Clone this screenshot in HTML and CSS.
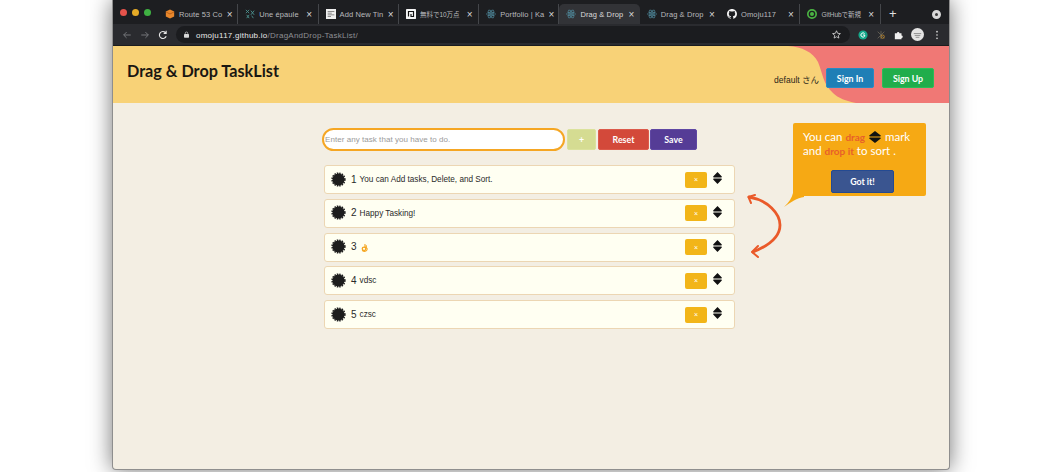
FILE: index.html
```html
<!DOCTYPE html>
<html lang="en">
<head>
    <meta charset="UTF-8">
    <meta name="viewport" content="width=device-width, initial-scale=1.0">
    <title>Drag & Drop TaskList</title>
    <link rel="stylesheet" href="styles.css">
</head>
<body>
    <svg class="defs" width="0" height="0">
        <symbol id="react" viewBox="0 0 12 12">
            <g fill="none" stroke="#4f8a9c" stroke-width=".8">
                <ellipse cx="6" cy="6" rx="5.4" ry="2.2"/>
                <ellipse cx="6" cy="6" rx="5.4" ry="2.2" transform="rotate(60 6 6)"/>
                <ellipse cx="6" cy="6" rx="5.4" ry="2.2" transform="rotate(120 6 6)"/>
            </g>
            <circle cx="6" cy="6" r="1.1" fill="#4f8a9c"/>
        </symbol>
        <symbol id="badge" viewBox="0 0 16 16">
            <circle cx="8" cy="8" r="6.4" fill="#1d1d1d"/>
            <circle cx="8" cy="8" r="6.8" fill="none" stroke="#1d1d1d" stroke-width="1.6" stroke-dasharray="1.6 1.07"/>
        </symbol>
        <symbol id="sort" viewBox="0 0 10 16" preserveAspectRatio="none">
            <path d="M5 0 L9.8 6 Q10 7.200 9 7.200 H1 Q0 7.200 .2 6 Z M1 8.800 H9 Q10 8.800 9.800 10 L5 16 L.2 10 Q0 8.800 1 8.800 Z" fill="#111"/>
        </symbol>
    </svg>

    <div class="window">
        <div class="tabstrip">
            <div class="lights"><i class="red"></i><i class="amber"></i><i class="green"></i></div>
            <div class="tab">
                <svg class="favicon" viewBox="0 0 12 12"><path d="M6 .5 11 3v6l-5 2.5L1 9V3z" fill="#e8872c"/><path d="M1 3l5 2.5L11 3v1L6 6.5 1 4z" fill="#b85f17"/></svg>
                <span class="tab-title">Route 53 Co</span><b>×</b>
            </div>
            <div class="tab">
                <svg class="favicon" viewBox="0 0 12 12"><g stroke="#4f9a96" stroke-width="1" fill="none"><path d="M1 1l4 4M5 1L1 5M7 2l4 5M11 2L7 7M2 7l3 4M5 7l-3 4M8 8l2 3"/></g></svg>
                <span class="tab-title">Une épaule</span><b>×</b>
            </div>
            <div class="tab">
                <svg class="favicon" viewBox="0 0 12 12"><rect width="12" height="12" fill="#eee"/><path d="M2 3h8M2 5h5M2 7h8M2 9h4" stroke="#777"/></svg>
                <span class="tab-title">Add New Tin</span><b>×</b>
            </div>
            <div class="tab">
                <svg class="favicon" viewBox="0 0 12 12"><rect width="12" height="12" rx="1" fill="#f4f4f4"/><path d="M3 9V3h6v6H6V6" fill="none" stroke="#111" stroke-width="1.4"/></svg>
                <span class="tab-title tab-title-cjk">無料で10万点</span><b>×</b>
            </div>
            <div class="tab">
                <svg class="favicon"><use href="#react"/></svg>
                <span class="tab-title">Portfolio | Ka</span><b>×</b>
            </div>
            <div class="tab tab-active">
                <svg class="favicon"><use href="#react"/></svg>
                <span class="tab-title">Drag &amp; Drop</span><b>×</b>
            </div>
            <div class="tab tab-plain">
                <svg class="favicon"><use href="#react"/></svg>
                <span class="tab-title">Drag &amp; Drop</span><b>×</b>
            </div>
            <div class="tab">
                <svg class="favicon" viewBox="0 0 16 16"><path fill="#f4f4f4" d="M8 0C3.6 0 0 3.6 0 8c0 3.5 2.3 6.5 5.5 7.6.4.1.5-.2.5-.4v-1.400c-2.200.5-2.700-1-2.700-1-.4-.9-.9-1.200-.9-1.200-.7-.5.1-.5.1-.5.8.1 1.200.8 1.200.8.7 1.200 1.900.9 2.300.7.1-.5.3-.9.5-1.100-1.800-.2-3.600-.9-3.600-4 0-.9.3-1.600.8-2.100-.1-.2-.4-1 .1-2.100 0 0 .7-.2 2.200.8.6-.2 1.300-.3 2-.3s1.400.1 2 .3c1.500-1 2.200-.8 2.200-.8.4 1.100.2 1.900.1 2.100.5.6.8 1.300.8 2.100 0 3.100-1.900 3.700-3.700 3.900.3.3.6.8.6 1.500v2.200c0 .2.1.5.6.4C13.700 14.500 16 11.500 16 8c0-4.400-3.600-8-8-8z"/></svg>
                <span class="tab-title">Omoju117</span><b>×</b>
            </div>
            <div class="tab">
                <svg class="favicon" viewBox="0 0 12 12"><circle cx="6" cy="6" r="5" fill="none" stroke="#4bb543" stroke-width="2"/><circle cx="6" cy="6" r="2.4" fill="#4bb543"/></svg>
                <span class="tab-title tab-title-cjk">GitHubで新規</span><b>×</b>
            </div>
            <div class="new-tab">+</div>
            <div class="cast"></div>
        </div>

        <div class="toolbar">
            <div class="nav-buttons">
                <svg viewBox="0 0 12 12"><path d="M10.5 6H2M5.5 2.500 2 6l3.500 3.500" fill="none" stroke="#74767a" stroke-width="1.2"/></svg>
                <svg viewBox="0 0 12 12"><path d="M1.5 6H10M6.500 2.500 10 6l-3.500 3.500" fill="none" stroke="#74767a" stroke-width="1.2"/></svg>
                <svg viewBox="0 0 12 12"><path d="M9.8 7.500A4.200 4.200 0 1 1 9 3.200M9.800 1v3H6.800" fill="none" stroke="#e6e6e6" stroke-width="1.3"/></svg>
            </div>
            <div class="omnibox">
                <svg class="lock" viewBox="0 0 8 10"><rect y="4" width="8" height="6" rx="1" fill="#d8d8d8"/><path d="M2 4.500V3a2 2 0 0 1 4 0v1.500" fill="none" stroke="#d8d8d8"/></svg>
                <span class="url"><strong>omoju117.github.io</strong>/DragAndDrop-TaskList/</span>
                <svg class="star" viewBox="0 0 12 12"><path d="M6 1l1.500 3.400 3.700.4-2.800 2.400.8 3.600L6 9l-3.200 1.800.8-3.600L.8 4.800l3.700-.4z" fill="none" stroke="#e6e6e6"/></svg>
            </div>
            <div class="extensions">
                <svg viewBox="0 0 12 12"><circle cx="6" cy="6" r="5.500" fill="#14a88a"/><path d="M8 4.500A2.500 2.500 0 1 0 8 7.500V6H6" fill="none" stroke="#fff" stroke-width="1.200"/></svg>
                <svg viewBox="0 0 12 12"><path d="M2 2l8 8M10 2L2 10M6 1v10" stroke="#6a6558" stroke-width="1"/><circle cx="8" cy="8" r="2" fill="none" stroke="#c08a2c"/></svg>
                <svg viewBox="0 0 12 12"><path d="M1 4h2.500a1.500 1.500 0 0 1 3 0H9v2.500a1.500 1.500 0 0 1 0 3V11H1z" fill="#f0f0f0"/></svg>
                <svg class="avatar" viewBox="0 0 14 14"><circle cx="7" cy="7" r="7" fill="#e4e4e4"/><path d="M3 6h8M4 8h6M5 10h4" stroke="#8a8a8a"/></svg>
                <svg class="menu-dots" viewBox="0 0 4 12"><circle cx="2" cy="2" r="1" fill="#ddd"/><circle cx="2" cy="6" r="1" fill="#ddd"/><circle cx="2" cy="10" r="1" fill="#ddd"/></svg>
            </div>
        </div>

        <header class="app-header">
            <svg class="header-blob" viewBox="0 0 161 57" preserveAspectRatio="none">
                <path d="M0 0 C14 1 25 6 30 16 C35 28 35 38 45 47 C50 52 58 55 68 57 H161 V0 Z" fill="#f07875"/>
            </svg>
            <h1 class="app-title">Drag &amp; Drop TaskList</h1>
            <div class="user-area">
                <span class="user-name">default さん</span>
                <button class="btn btn-signin">Sign In</button>
                <button class="btn btn-signup">Sign Up</button>
            </div>
        </header>

        <main class="content">
            <div class="tasks">
                <div class="task-form">
                    <input class="task-input" type="text" placeholder="Enter any task that you have to do.">
                    <button class="btn btn-add">+</button>
                    <button class="btn btn-reset">Reset</button>
                    <button class="btn btn-save">Save</button>
                </div>
                <ul class="task-list">
                    <li class="task">
                        <svg class="task-badge"><use href="#badge"/></svg>
                        <span class="task-num">1</span>
                        <span class="task-text">You can Add tasks, Delete, and Sort.</span>
                        <button class="btn-delete">×</button>
                        <svg class="task-sort"><use href="#sort"/></svg>
                    </li>
                    <li class="task">
                        <svg class="task-badge"><use href="#badge"/></svg>
                        <span class="task-num">2</span>
                        <span class="task-text">Happy Tasking!</span>
                        <button class="btn-delete">×</button>
                        <svg class="task-sort"><use href="#sort"/></svg>
                    </li>
                    <li class="task">
                        <svg class="task-badge"><use href="#badge"/></svg>
                        <span class="task-num">3</span>
                        <svg class="ok-hand" viewBox="0 0 10 10"><circle cx="4.500" cy="6.500" r="2" fill="none" stroke="#f5a623" stroke-width="1.500"/><path d="M6 5.500 C8 5 8.500 6.500 7.500 8 C6.500 9.800 3 9.800 2.500 8 M5.500 5V1M7 5.500V2.500" fill="none" stroke="#f5a623" stroke-width="1.200"/></svg>
                        <span class="task-text"></span>
                        <button class="btn-delete">×</button>
                        <svg class="task-sort"><use href="#sort"/></svg>
                    </li>
                    <li class="task">
                        <svg class="task-badge"><use href="#badge"/></svg>
                        <span class="task-num">4</span>
                        <span class="task-text">vdsc</span>
                        <button class="btn-delete">×</button>
                        <svg class="task-sort"><use href="#sort"/></svg>
                    </li>
                    <li class="task">
                        <svg class="task-badge"><use href="#badge"/></svg>
                        <span class="task-num">5</span>
                        <span class="task-text">czsc</span>
                        <button class="btn-delete">×</button>
                        <svg class="task-sort"><use href="#sort"/></svg>
                    </li>
                </ul>
            </div>

            <aside class="tip">
                <p class="tip-text">You can <em>drag</em> <svg class="tip-sort"><use href="#sort"/></svg> mark<br>and <em>drop it</em> to sort .</p>
                <button class="btn btn-gotit">Got it!</button>
                <svg class="tip-tail" viewBox="0 0 20 14"><path d="M20 0 V4 C13 5 7 9 0 14 C5 9 8 5 9 0 Z" fill="#f6a914"/></svg>
            </aside>

            <svg class="swap-arrow" viewBox="0 0 40 66">
                <path d="M3 3 C22 6 34 20 34 31 C34 44 22 52 7 58" fill="none" stroke="#ea5a2a" stroke-width="2.800" stroke-linecap="round"/>
                <path d="M9 1 L2.500 3 L5 9 M12 52 L6 58 L12 63" fill="none" stroke="#ea5a2a" stroke-width="2" stroke-linecap="round" stroke-linejoin="round"/>
            </svg>
        </main>
    </div>
</body>
</html>
```

FILE: styles.css
```css
* {
    box-sizing: border-box;
}
html, body {
    height: 100%;
}
body {
    margin: 0;
    overflow: hidden;
    background-color: #fff;
    font-family: "Liberation Sans", Arial, sans-serif;
}
.defs {
    position: absolute;
}
.window {
    width: 838px;
    height: 470px;
    margin-left: 112px;
    display: flex;
    flex-direction: column;
    background-color: #f3eee3;
    border: 1px solid #8e8e8e;
    border-top: none;
    border-radius: 0 0 4px 4px;
    box-shadow: 0 0 22px rgba(0, 0, 0, 0.55);
    overflow: hidden;
}

/* browser chrome */
.tabstrip {
    height: 24px;
    display: flex;
    align-items: center;
    background-color: #1d1e21;
    color: #b9babd;
    font-size: 7.5px;
}
.lights {
    width: 45px;
    display: flex;
    gap: 5px;
    padding-left: 7px;
}
.lights i {
    width: 7px;
    height: 7px;
    border-radius: 50%;
}
.lights .red { background-color: #e5534b; }
.lights .amber { background-color: #e5ab27; }
.lights .green { background-color: #3fb142; }
.tab {
    width: 80.3px;
    height: 20px;
    margin-top: 4px;
    padding: 0 4px 0 7px;
    display: flex;
    align-items: center;
    gap: 4px;
    border-right: 1px solid #44464a;
    white-space: nowrap;
}
.tab b {
    width: 9px;
    font-size: 10px;
    font-weight: normal;
    text-align: center;
    color: #d8d8d8;
}
.tab-active {
    background-color: #323337;
    border-radius: 5px 5px 0 0;
    border-right: none;
    color: #dcdcdc;
}
.tab-plain {
    border-right: none;
}
.favicon {
    width: 10px;
    height: 10px;
    flex: none;
}
.tab-title {
    flex: 1;
    letter-spacing: 0.1px;
    font-family: "Liberation Sans", "Noto Sans CJK JP", sans-serif;
}
.tab-title-cjk {
    font-size: 6.5px;
    letter-spacing: 0;
}
.new-tab {
    width: 24px;
    text-align: center;
    font-size: 13px;
    color: #e0e0e0;
    margin-top: 2px;
}
.cast {
    width: 9px;
    height: 9px;
    margin: 4px 8px 0 auto;
    border-radius: 50%;
    background-color: #3a3a3a;
    border: 3px solid #d8d8d8;
}
.toolbar {
    height: 22px;
    display: flex;
    align-items: center;
    background-color: #2a2b2f;
    border-bottom: 1px solid #1b1c1e;
}
.nav-buttons {
    width: 63px;
    display: flex;
    gap: 8px;
    padding-left: 9px;
}
.nav-buttons svg {
    width: 10px;
    height: 10px;
}
.omnibox {
    width: 674px;
    height: 17px;
    padding: 0 9px 0 8px;
    display: flex;
    align-items: center;
    background-color: #1b1c1f;
    border-radius: 9px;
    font-size: 8px;
}
.lock {
    width: 5px;
    height: 7px;
    margin-right: 7px;
}
.url {
    flex: 1;
    margin-top: 1px;
    color: #8e9094;
    letter-spacing: 0.25px;
}
.url strong {
    font-weight: normal;
    color: #e8e8e8;
}
.star {
    width: 9px;
    height: 9px;
}
.extensions {
    flex: 1;
    display: flex;
    align-items: center;
    gap: 8px;
    padding-left: 8px;
}
.extensions svg {
    width: 10px;
    height: 10px;
}
.extensions .avatar {
    width: 13px;
    height: 13px;
    margin-left: -1px;
}
.extensions .menu-dots {
    width: 4px;
    margin-left: 3px;
}

/* app header */
.app-header {
    position: relative;
    height: 57px;
    display: flex;
    justify-content: space-between;
    background-color: #f8d277;
    padding: 15px 15px 0 14px;
}
.header-blob {
    position: absolute;
    top: 0;
    right: 0;
    width: 161px;
    height: 57px;
}
.app-title {
    position: relative;
    margin: 0;
    font-family: Lato, sans-serif;
    font-size: 16.2px;
    font-weight: 700;
    color: #1a1712;
}
.user-area {
    position: relative;
    display: flex;
    align-items: flex-start;
    padding-top: 7px;
}
.user-name {
    margin: 5px 7px 0 0;
    font-size: 8.5px;
    color: #2b2619;
    font-family: "Liberation Sans", "Noto Sans CJK JP", sans-serif;
}
.btn {
    border: 1px solid transparent;
    border-radius: 2px;
    padding: 0;
    font-family: Lato, sans-serif;
    font-size: 8.8px;
    font-weight: 700;
    color: #fff;
}
.btn-signin {
    width: 48px;
    height: 20px;
    background-color: #1f7fb6;
    border-color: #2a8ac2;
}
.btn-signup {
    width: 52px;
    height: 20px;
    margin-left: 8px;
    background-color: #21ad4b;
    border-color: #2cbb58;
}

/* main area */
.content {
    position: relative;
    flex: 1;
    display: flex;
    align-items: flex-start;
    padding: 20px 0 0 209px;
}
.tasks {
    width: 413px;
    padding-top: 5px;
}
.task-form {
    display: flex;
    align-items: center;
    gap: 2px;
    margin-bottom: 14px;
}
.task-input {
    width: 243px;
    height: 23px;
    padding: 0 1px;
    border: 2px solid #f5a623;
    border-radius: 12px;
    background-color: #fff;
    font-family: "Liberation Sans", Arial, sans-serif;
    font-size: 8px;
    letter-spacing: 0.05px;
    outline: none;
}
.task-input::placeholder {
    color: #9a9a9a;
}
.btn-add {
    width: 29px;
    height: 21px;
    background-color: #d5dc92;
    border-color: #dbe29c;
}
.btn-reset {
    width: 51px;
    height: 21px;
    background-color: #d3493a;
    border-color: #dc5a4a;
}
.btn-save {
    width: 47px;
    height: 21px;
    margin-left: -1px;
    background-color: #553c96;
    border-color: #5f47a3;
}
.task-list {
    list-style: none;
    margin: 0 0 0 2px;
    padding: 0;
    display: flex;
    flex-direction: column;
    gap: 4.8px;
}
.task {
    width: 411px;
    height: 29px;
    padding: 0 12px 0 6px;
    display: flex;
    align-items: center;
    background-color: #fffff2;
    border: 1px solid #ecd6b3;
    border-radius: 3px;
    color: #2a2a2a;
}
.task-badge {
    width: 15px;
    height: 15px;
    flex: none;
    margin: 0 5px 1px 0;
}
.task-num {
    font-size: 10px;
    margin: 0 3px 1px 0;
}
.task-text {
    flex: 1;
    font-size: 8.2px;
}
.ok-hand {
    width: 9px;
    height: 9px;
}
.btn-delete {
    width: 22px;
    height: 16px;
    padding: 0;
    border: none;
    border-radius: 2px;
    background-color: #f2b518;
    color: #fff;
    font-size: 7px;
}
.task-sort {
    width: 9px;
    height: 12px;
    margin-left: 6px;
    margin-bottom: 3px;
}

/* tip bubble */
.tip {
    position: relative;
    width: 133px;
    height: 73px;
    margin-left: 58px;
    padding: 7px 10px;
    background-color: #f6a914;
    border-radius: 2px;
    color: #fff;
}
.tip-text {
    margin: 0 0 12px;
    font-family: Lato, sans-serif;
    font-size: 11.5px;
    line-height: 13px;
    white-space: nowrap;
}
.tip-text em {
    font-style: normal;
    font-weight: 700;
    font-size: 10px;
    color: #e8602a;
}
.tip-sort {
    width: 12px;
    height: 12px;
    margin: 0 1px;
    vertical-align: -2px;
}
.btn-gotit {
    display: block;
    width: 63px;
    height: 23px;
    margin-left: 28px;
    background-color: #3a5590;
    border-color: #244a92;
}
.tip-tail {
    position: absolute;
    left: -9px;
    bottom: -11px;
    width: 20px;
    height: 14px;
}
.swap-arrow {
    position: absolute;
    left: 633px;
    top: 91px;
    width: 40px;
    height: 66px;
}
```
